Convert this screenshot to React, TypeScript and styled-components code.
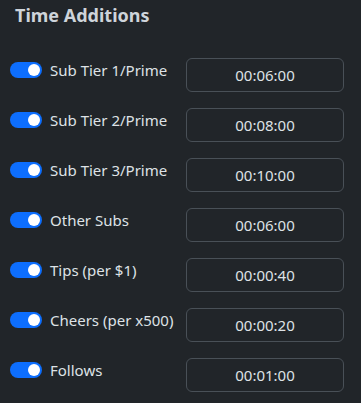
import React from "react";
import styled, { createGlobalStyle } from "styled-components";

const Global = createGlobalStyle`
  html, body { margin: 0; padding: 0; background: #212529; }
  body { font-family: "Noto Sans", "Open Sans", sans-serif; color: #dee2e6; }
  * { box-sizing: border-box; }
`;

const Page = styled.div`
  width: 361px;
  height: 403px;
  background: #212529;
  padding: 3px 17px 0 10px;
`;

const Title = styled.h5`
  margin: 0 0 31px 5px;
  font-size: 18px;
  font-weight: 700;
  line-height: 24px;
  color: #ced4da;
`;

const List = styled.div`
  display: flex;
  flex-direction: column;
  gap: 16px;
`;

const Row = styled.div`
  display: flex;
  align-items: flex-start;
  height: 34px;
`;

const Check = styled.label`
  display: flex;
  align-items: flex-start;
  gap: 8px;
  width: 176px;
  line-height: 24px;
  font-size: 15px;
  color: #dee2e6;
`;

const Switch = styled.span<{ $on: boolean }>`
  position: relative;
  flex: none;
  margin-top: 4px;
  width: 32px;
  height: 16px;
  border-radius: 8px;
  background: ${(p) => (p.$on ? "#0d6efd" : "#343a40")};
  &::after {
    content: "";
    position: absolute;
    top: 2px;
    left: ${(p) => (p.$on ? "18px" : "2px")};
    width: 12px;
    height: 12px;
    border-radius: 50%;
    background: #fff;
  }
`;

const TimeInput = styled.input`
  width: 158px;
  height: 34px;
  border: 1px solid #495057;
  border-radius: 6px;
  background: #212529;
  color: #dee2e6;
  font-family: inherit;
  font-size: 15px;
  text-align: center;
  padding: 0 8px;
  outline: none;
`;

const items = [
  ["Sub Tier 1/Prime", "00:06:00"],
  ["Sub Tier 2/Prime", "00:08:00"],
  ["Sub Tier 3/Prime", "00:10:00"],
  ["Other Subs", "00:06:00"],
  ["Tips (per $1)", "00:00:40"],
  ["Cheers (per x500)", "00:00:20"],
  ["Follows", "00:01:00"],
];

export default function App() {
  return (
    <>
      <Global />
      <Page>
        <Title>Time Additions</Title>
        <List>
          {items.map(([label, value]) => (
            <Row key={label}>
              <Check>
                <Switch $on={true} />
                {label}
              </Check>
              <TimeInput defaultValue={value} readOnly />
            </Row>
          ))}
        </List>
      </Page>
    </>
  );
}
